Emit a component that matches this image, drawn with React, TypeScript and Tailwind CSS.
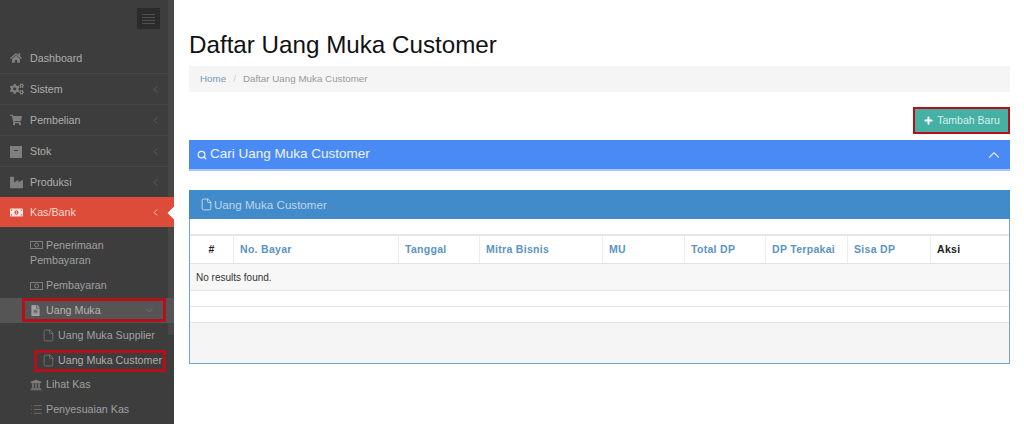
import { ChevronDown, ChevronLeft, ChevronUp, Plus, Search, File, List } from "lucide-react";
import { FaHome, FaCogs, FaShoppingCart, FaIndustry, FaMoneyBillAlt, FaFileAlt, FaUniversity } from "react-icons/fa";
import { ReactNode } from "react";

function BoxIcon() {
  return (
    <svg width="12" height="13" viewBox="0 0 12 13" fill="currentColor">
      <path d="M0 1h12v12H0z" />
      <path d="M4 5h4v1H4z" fill="#3d3d3d" />
    </svg>
  );
}

function MoneyOutline() {
  return (
    <svg width="13" height="10" viewBox="0 0 13 10" fill="none" stroke="currentColor">
      <rect x="0.5" y="1.5" width="12" height="7" />
      <circle cx="6.5" cy="5" r="2" />
    </svg>
  );
}

const MENU = [
  { label: "Dashboard", icon: <FaHome size={12} />, arrow: false },
  { label: "Sistem", icon: <FaCogs size={14} />, arrow: true },
  { label: "Pembelian", icon: <FaShoppingCart size={12} />, arrow: true },
  { label: "Stok", icon: <BoxIcon />, arrow: true },
  { label: "Produksi", icon: <FaIndustry size={13} />, arrow: true },
];

const COLUMNS = [
  { label: "No. Bayar", w: "w-[165px]" },
  { label: "Tanggal", w: "w-[81px]" },
  { label: "Mitra Bisnis", w: "w-[123px]" },
  { label: "MU", w: "w-[82px]" },
  { label: "Total DP", w: "w-[81px]" },
  { label: "DP Terpakai", w: "w-[82px]" },
  { label: "Sisa DP", w: "w-[83px]" },
];

function SubItem({ icon, children, className = "" }: { icon: ReactNode; children: ReactNode; className?: string }) {
  return (
    <div className={`flex items-center h-[25px] pl-[30px] text-[#a0a0a0] ${className}`}>
      <span className="w-[16px] flex justify-start text-[#7d7d7d]">{icon}</span>
      {children}
    </div>
  );
}

function Sidebar() {
  return (
    <aside className="relative w-[174px] h-[424px] shrink-0 overflow-hidden bg-[#3d3d3d] text-[10.7px]">
      {/* scrollbar thumb */}
      <div className="absolute right-0 top-0 w-[6px] h-[335px] bg-[#474747]" />
      <div className="h-[43px] flex items-start justify-end pt-[8px] pr-[14px]">
        <div className="w-[23px] h-[21px] bg-[#2b2b2b] flex flex-col items-center justify-center gap-[2px]">
          <span className="w-[13px] h-[1px] bg-[#505050]" />
          <span className="w-[13px] h-[1px] bg-[#505050]" />
          <span className="w-[13px] h-[1px] bg-[#505050]" />
          <span className="w-[13px] h-[1px] bg-[#505050]" />
        </div>
      </div>
      {MENU.map((m) => (
        <div key={m.label} className="flex items-center h-[31px] mr-[6px] pl-[10px] pr-[7px] border-b border-[#464646] text-[#adadad]">
          <span className="w-[20px] flex justify-start text-[#7f7f7f]">{m.icon}</span>
          <span className="flex-1">{m.label}</span>
          {m.arrow && <ChevronLeft size={11} className="text-[#636363]" />}
        </div>
      ))}
      <div className="relative flex items-center h-[30px] pl-[10px] pr-[13px] -mt-[1px] bg-[#dd4b39] text-[#f5d9d4]">
        <span className="w-[20px] flex justify-start text-[#f7e5e2]"><FaMoneyBillAlt size={13} /></span>
        <span className="flex-1">Kas/Bank</span>
        <ChevronLeft size={11} />
      </div>
      <div className="pt-[6px]">
        <div className="pl-[30px] pr-2 pt-[5px] pb-[5px] leading-[15px] text-[#a0a0a0]">
          <span className="inline-block text-[#7d7d7d] mr-[3px] align-[-1px]"><MoneyOutline /></span>
          Penerimaan
          <br />
          Pembayaran
        </div>
        <SubItem icon={<MoneyOutline />} className="h-[24px]">Pembayaran</SubItem>
        <div className="relative flex items-center h-[25px] pl-[30px] pr-[19px] bg-[#555555] text-[#b4b4b4]">
          <span className="w-[16px] text-[#a0a0a0]"><FaFileAlt size={11} /></span>
          <span className="flex-1">Uang Muka</span>
          <ChevronDown size={11} className="text-[#747474]" />
        </div>
        <div className="flex items-center h-[25px] pl-[42px] text-[#a0a0a0]">
          <File size={13} strokeWidth={1.4} className="text-[#7d7d7d] mr-[3px]" />
          Uang Muka Supplier
        </div>
        <div className="flex items-center h-[24px] pl-[42px] text-[#adadad]">
          <File size={13} strokeWidth={1.4} className="text-[#7d7d7d] mr-[3px]" />
          Uang Muka Customer
        </div>
        <SubItem icon={<FaUniversity size={12} />}>Lihat Kas</SubItem>
        <SubItem icon={<List size={13} strokeWidth={1.4} />}>Penyesuaian Kas</SubItem>
      </div>
      {/* notch on the active row */}
      <div className="absolute left-[170px] top-[207px] w-[12px] h-[12px] rotate-45 bg-white" />
      {/* red annotation boxes */}
      <div className="absolute left-[22px] top-[298px] w-[144px] h-[24px] border-[3px] border-[#b3101a]" />
      <div className="absolute left-[34px] top-[350px] w-[132px] h-[22px] border-[3px] border-[#b3101a]" />
    </aside>
  );
}

export default function App() {
  return (
    <div className="flex w-[1024px] h-[424px] overflow-hidden bg-white font-['Liberation_Sans',Arial,sans-serif]">
      <Sidebar />
      <main className="flex-1 pl-[15px] pr-[14px] pt-[31px]">
        <h1 className="text-[24.2px] leading-[28px] text-[#111111] mb-[7px]">Daftar Uang Muka Customer</h1>
        <div className="h-[26px] flex items-center px-[11px] bg-[#f5f5f5] text-[9.8px]">
          <span className="text-[#6f9bc4]">Home</span>
          <span className="mx-[7px] text-[#cccccc]">/</span>
          <span className="text-[#9a9a9a]">Daftar Uang Muka Customer</span>
        </div>
        <div className="flex justify-end mt-[15px]">
          <button className="flex items-center justify-center w-[97px] h-[27px] bg-[#45b1a5] border-[2px] border-[#b3101a] text-[10.5px] text-[#d8f0ec]">
            <Plus size={11} strokeWidth={4} className="text-white mr-[3px]" />
            Tambah Baru
          </button>
        </div>
        <div className="flex items-center justify-between h-[31px] mt-[6px] pl-[8px] pr-[7px] bg-[#4a8af4] border-b-2 border-[#a9c8f5] text-[#eef4fe] text-[13.5px]">
          <span className="flex items-center">
            <Search size={10} strokeWidth={3} className="mr-[3px]" />
            Cari Uang Muka Customer
          </span>
          <ChevronUp size={18} strokeWidth={1.6} className="text-[#d6e5fb]" />
        </div>
        <div className="mt-[19px] h-[174px] border border-[#6ea8d0] border-t-0 flex flex-col">
          <div className="h-[29px] shrink-0 -mx-[1px] flex items-center pl-[11px] bg-[#428bca] text-[#bcd6ec] text-[11.6px]">
            <File size={13} strokeWidth={1.4} className="mr-[1px] text-[#e0edf7]" />
            Uang Muka Customer
          </div>
          <div className="h-[17px] shrink-0 border-b-2 border-[#e6e6e6]" />
          <div className="flex h-[28px] shrink-0 border-b border-[#e3e3e3] text-[10.5px] font-bold tracking-[0.3px]">
            <div className="w-[44px] flex items-center justify-center border-r border-[#ececec] text-[#222222]">#</div>
            {COLUMNS.map((c) => (
              <div key={c.label} className={`${c.w} flex items-center pl-[6px] border-r border-[#ececec] text-[#5b93c4]`}>
                {c.label}
              </div>
            ))}
            <div className="flex-1 flex items-center pl-[6px] text-[#222222]">Aksi</div>
          </div>
          <div className="h-[27px] shrink-0 flex items-center pl-[6px] bg-[#f7f7f7] border-b border-[#e3e3e3] text-[10px] text-[#333333]">
            No results found.
          </div>
          <div className="h-[16px] shrink-0 border-b border-[#e6e6e6]" />
          <div className="h-[16px] shrink-0 border-b border-[#e3e3e3]" />
          <div className="flex-1 bg-[#f5f5f5]" />
        </div>
      </main>
    </div>
  );
}
